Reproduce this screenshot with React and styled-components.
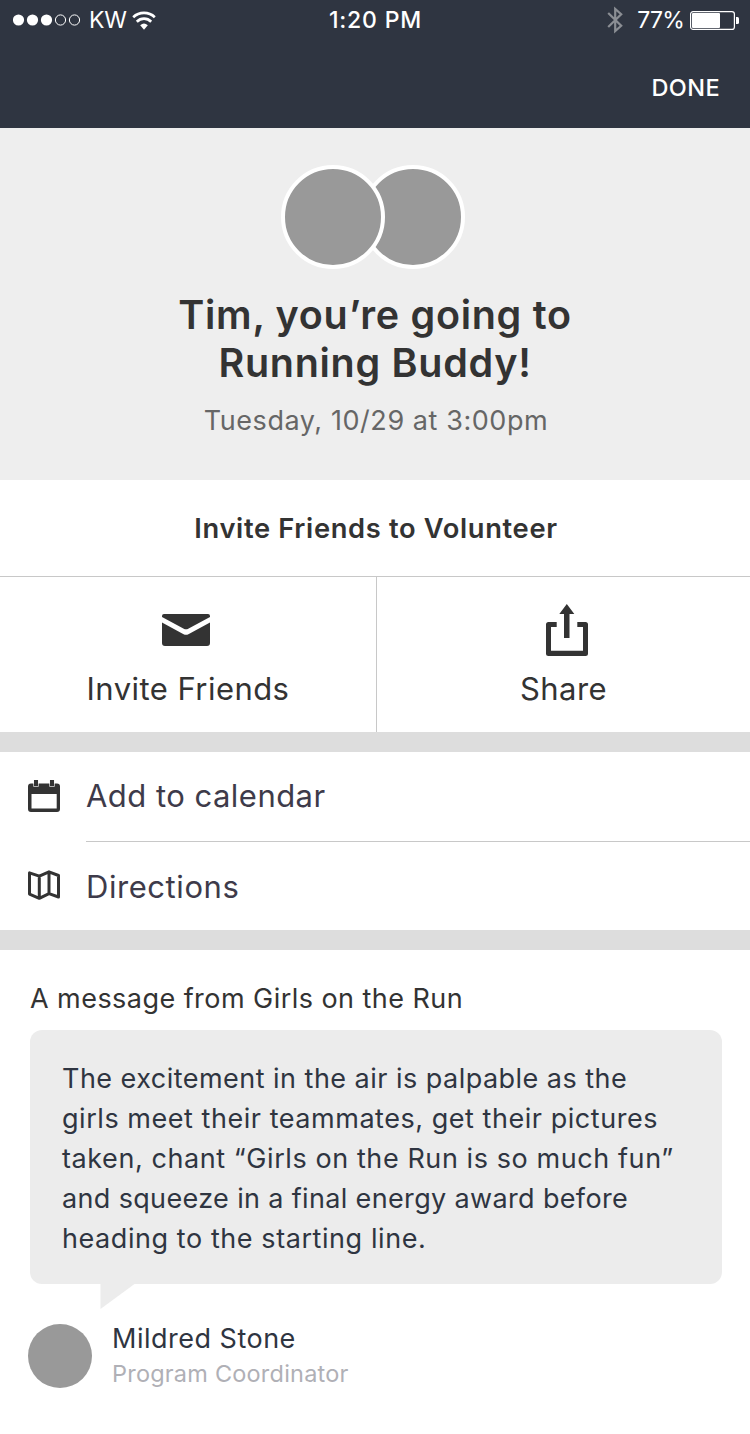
import React from "react";
import styled, { createGlobalStyle } from "styled-components";

const Global = createGlobalStyle`
  *, *::before, *::after { box-sizing: border-box; }
  body {
    margin: 0;
    background: #fff;
    color: #333;
    font-family: Inter, "Liberation Sans", sans-serif;
    -webkit-font-smoothing: antialiased;
  }
  svg { display: block; flex: none; }
  h1, h2, p { margin: 0; }
  button { border: 0; padding: 0; background: none; font: inherit; color: inherit; cursor: pointer; }
`;

const Screen = styled.main`
  width: 750px;
  height: 1434px;
  overflow: hidden;
  background: #fff;
`;

/* One line of text; spacing is tuned per use. */
const Text = styled.span`
  display: block;
  white-space: nowrap;
  font-size: ${(p) => p.$size}px;
  line-height: ${(p) => p.$line}px;
  letter-spacing: ${(p) => p.$track || 0}px;
  font-weight: ${(p) => p.$weight || 400};
  color: ${(p) => p.$color || "inherit"};
`;

const Header = styled.header`
  height: 128px;
  background: #2f3541;
  color: #fff;
`;

const StatusBar = styled.div`
  height: 40px;
  display: grid;
  grid-template-columns: 1fr auto 1fr;
  align-items: center;
  padding: 0 11px 0 13px;
`;

const StatusGroup = styled.div`
  display: flex;
  align-items: center;
  justify-content: ${(p) => (p.$end ? "flex-end" : "flex-start")};
`;

const Carrier = styled(Text)`
  margin: 0 5px 0 8px;
`;

const Clock = styled(Text)`
  padding-right: 1px;
`;

const Percent = styled(Text)`
  margin: 0 6px 0 13px;
`;

const NavBar = styled.nav`
  height: 88px;
  display: flex;
  align-items: center;
  justify-content: flex-end;
  padding: 8px 30px 0 0;
`;

const Hero = styled.section`
  height: 352px;
  background: #eee;
  display: flex;
  flex-direction: column;
  align-items: center;
  padding-top: 37px;
  text-align: center;
`;

const Avatars = styled.div`
  display: flex;
  flex-direction: row-reverse;
  margin: 0 5px 22px 0;
`;

const Avatar = styled.div`
  width: 104px;
  height: 104px;
  border: 4px solid #fff;
  border-radius: 50%;
  background: #999;
  & + & { margin-right: -24px; z-index: 1; }
`;

const HeroDate = styled.p`
  margin-top: 16px;
  padding-left: 2px;
`;

const InviteHeading = styled.div`
  height: 97px;
  display: flex;
  align-items: center;
  justify-content: center;
  padding: 2px 0 0 2px;
  border-bottom: 1px solid #c8c8c8;
`;

const Actions = styled.section`
  height: 155px;
  display: grid;
  grid-template-columns: 377px 373px;
`;

const Action = styled.button`
  display: flex;
  flex-direction: column;
  align-items: center;
  &:first-child { border-right: 1px solid #c8c8c8; }
`;

const ActionIcon = styled.span`
  height: 92px;
  display: flex;
  align-items: flex-start;
  padding-top: ${(p) => p.$top}px;
  padding-left: ${(p) => p.$left || 0}px;
  padding-right: ${(p) => p.$right || 0}px;
`;

const Band = styled.div`
  height: 20px;
  background: #ddd;
`;

const Row = styled.button`
  width: 100%;
  display: flex;
  height: ${(p) => p.$height}px;
  padding-left: 28px;
  text-align: left;
`;

const RowIcon = styled.span`
  width: 58px;
  padding-top: 28px;
`;

const RowLabel = styled.span`
  flex: 1;
  display: flex;
  padding-top: ${(p) => p.$top}px;
  border-bottom: ${(p) => (p.$divided ? "1px solid #c8c8c8" : "0")};
`;

const Message = styled.section`
  padding: 31px 28px 0 30px;
`;

const Bubble = styled.div`
  height: 254px;
  margin-top: 13px;
  padding: 29px 32px;
  border-radius: 12px;
  background: #ececec;
`;

const Tail = styled.svg`
  margin-left: 70px;
`;

const Author = styled.footer`
  display: flex;
  gap: 20px;
  margin: 15px 0 0 -2px;
`;

const AuthorPhoto = styled.div`
  width: 64px;
  height: 64px;
  border-radius: 50%;
  background: #999;
`;

const AuthorRole = styled.p`
  margin-top: 5px;
`;

const Signal = () => (
  <svg width="68" height="12" viewBox="0 0 68 12">
    {[5.5, 19.5, 33.5].map((x) => <circle key={x} cx={x} cy="6" r="5.6" fill="#fff" />)}
    {[47.5, 61.5].map((x) => <circle key={x} cx={x} cy="6" r="5.1" fill="none" stroke="#fff" />)}
  </svg>
);

const Wifi = () => (
  <svg width="24" height="19" viewBox="0 0 24 19">
    <g fill="none" stroke="#fff" strokeWidth="2.7">
      <path d="M1.2 6.2C7.2.5 16.8.5 22.8 6.2" />
      <path d="M4.8 10.7C8.9 6.7 15.1 6.7 19.2 10.7" />
    </g>
    <path d="M8.2 14.2Q12 10.6 15.8 14.2L12 18.7Z" fill="#fff" />
  </svg>
);

const Bluetooth = () => (
  <svg width="17" height="28" viewBox="0 0 17 28">
    <path d="M1.2 7L14.2 19.8L8.2 25V3L14.2 8.2L1.2 21" fill="none" stroke="#8b8e94" strokeWidth="2.2" />
  </svg>
);

const Battery = () => (
  <svg width="49" height="19" viewBox="0 0 49 19">
    <rect x=".6" y=".6" width="43.8" height="17.8" rx="2.5" fill="none" stroke="#fff" strokeWidth="1.2" />
    <rect x="2" y="2" width="28" height="15" rx="1" fill="#fff" />
    <path d="M46 6h1.5q1.5 0 1.5 1.5v4q0 1.5-1.5 1.5H46z" fill="#fff" />
  </svg>
);

const Envelope = () => (
  <svg width="48" height="32" viewBox="0 0 48 32" fill="#333">
    <path d="M2 0H46Q48 0 48 2V3L26.2 14.7Q24 15.9 21.8 14.7L0 3V2Q0 0 2 0Z" />
    <path d="M0 8.6L21.6 20.2Q24 21.5 26.4 20.2L48 8.6V29Q48 32 45 32H3Q0 32 0 29Z" />
  </svg>
);

const Share = () => (
  <svg width="42" height="52" viewBox="0 0 42 52" fill="#333">
    <path d="M20.8 0L28.3 10H23.5V34H18V10H13.3Z" />
    <path d="M10.7 18V23H5V46.7H37V23H31.3V18H39.5Q42 18 42 20.5V49.5Q42 52 39.5 52H2.5Q0 52 0 49.5V20.5Q0 18 2.5 18Z" />
  </svg>
);

const Calendar = () => (
  <svg width="32" height="32" viewBox="0 0 32 32">
    <path fillRule="evenodd" fill="#333" d="M3 3.5H29Q32 3.5 32 6.5V29Q32 32 29 32H3Q0 32 0 29V6.5Q0 3.5 3 3.5ZM3.5 14V28.5H28.7V14Z" />
    <path d="M5.3 0H10.7V6.8H5.3ZM21.3 0H26.7V6.8H21.3Z" fill="#ddd" />
    <path d="M5.3 0H10.7V3.5H5.3ZM21.3 0H26.7V3.5H21.3Z" fill="#fff" />
    <path d="M6 0H10V6H6ZM22 0H26V6H22Z" fill="#333" />
  </svg>
);

const MapIcon = () => (
  <svg width="32" height="31" viewBox="0 0 32 31">
    <path d="M1.5 2.8L11.3 6.2L21 1.8L30.5 5.5V27L21 23.7L11.3 28.3L1.5 24.1ZM11.3 6.2V28.3M21 1.8V23.7" fill="none" stroke="#333" strokeWidth="3" strokeLinejoin="round" />
  </svg>
);

const messageLines = [
  { text: "The excitement in the air is palpable as the", track: 0.47 },
  { text: "girls meet their teammates, get their pictures", track: 0.54 },
  { text: "taken, chant “Girls on the Run is so much fun”", track: 0.58 },
  { text: "and squeeze in a final energy award before", track: 0.35 },
  { text: "heading to the starting line.", track: 0.57 },
];

export default function App() {
  return (
    <>
      <Global />
      <Screen>
        <Header>
          <StatusBar>
            <StatusGroup>
              <Signal />
              <Carrier $size={23} $line={28} $track={-0.3}>KW</Carrier>
              <Wifi />
            </StatusGroup>
            <Clock $size={23} $line={28} $weight={500} $track={0.8}>1:20 PM</Clock>
            <StatusGroup $end>
              <Bluetooth />
              <Percent $size={23} $line={28} $track={-0.8}>77%</Percent>
              <Battery />
            </StatusGroup>
          </StatusBar>
          <NavBar>
            <button><Text $size={23.5} $line={30} $weight={500} $track={0.4}>DONE</Text></button>
          </NavBar>
        </Header>

        <Hero>
          <Avatars><Avatar /><Avatar /></Avatars>
          <h1>
            <Text $size={39.5} $line={48} $weight={600} $track={0.71}>Tim, you’re going to</Text>
            <Text $size={39.5} $line={48} $weight={600} $track={0.71}>Running Buddy!</Text>
          </h1>
          <HeroDate><Text $size={27} $line={36} $track={0.57} $color="#666">Tuesday, 10/29 at 3:00pm</Text></HeroDate>
        </Hero>

        <InviteHeading>
          <h2><Text $size={27.3} $line={36} $weight={600} $track={0.66}>Invite Friends to Volunteer</Text></h2>
        </InviteHeading>

        <Actions>
          <Action>
            <ActionIcon $top={37} $right={4}><Envelope /></ActionIcon>
            <Text $size={31} $line={40} $track={0.45}>Invite Friends</Text>
          </Action>
          <Action>
            <ActionIcon $top={27} $left={7}><Share /></ActionIcon>
            <Text $size={31} $line={40} $track={0.4}>Share</Text>
          </Action>
        </Actions>

        <Band />
        <Row $height={90}>
          <RowIcon><Calendar /></RowIcon>
          <RowLabel $top={24} $divided><Text $size={31} $line={40} $track={0.47} $color="#3e3b4a">Add to calendar</Text></RowLabel>
        </Row>
        <Row $height={88}>
          <RowIcon><MapIcon /></RowIcon>
          <RowLabel $top={25}><Text $size={31} $line={40} $track={0.56} $color="#3e3b4a">Directions</Text></RowLabel>
        </Row>
        <Band />

        <Message>
          <h2><Text $size={27} $line={36} $track={0.45}>A message from Girls on the Run</Text></h2>
          <Bubble>
            {messageLines.map((l) => (
              <Text key={l.text} $size={27} $line={40} $track={l.track} $color="#2f3541">{l.text}</Text>
            ))}
          </Bubble>
          <Tail width="35" height="25" viewBox="0 0 35 25"><path d="M.5 0H34.5L.5 25Z" fill="#ececec" /></Tail>
          <Author>
            <AuthorPhoto />
            <div>
              <Text $size={27} $line={30} $track={0.5} $color="#2f3541">Mildred Stone</Text>
              <AuthorRole><Text $size={23.5} $line={30} $track={0.21} $color="#b0b0b6">Program Coordinator</Text></AuthorRole>
            </div>
          </Author>
        </Message>
      </Screen>
    </>
  );
}
